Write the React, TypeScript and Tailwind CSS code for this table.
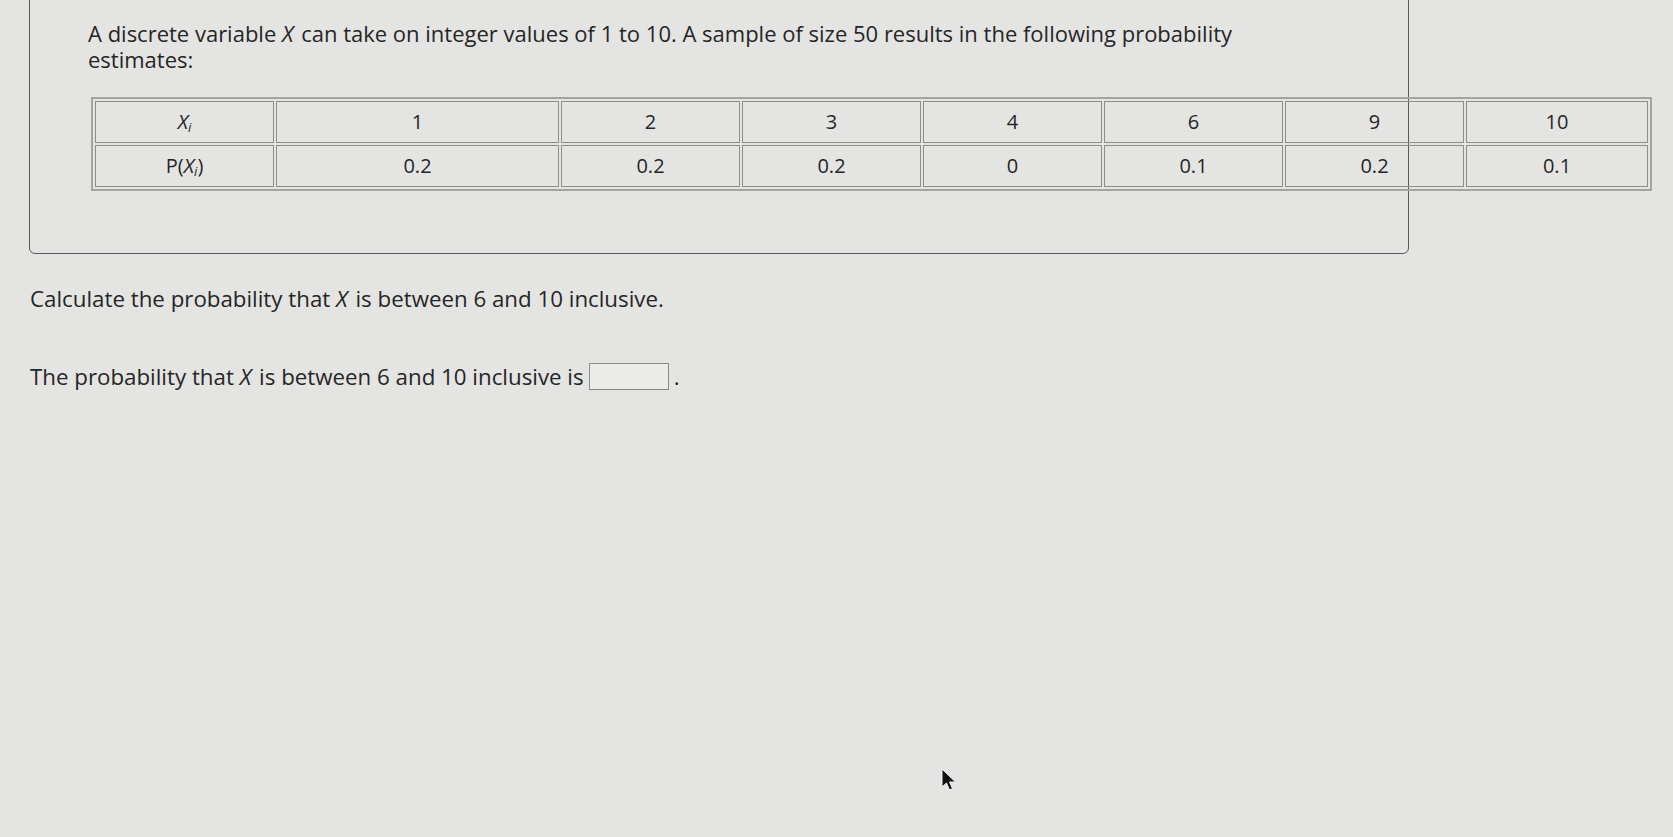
import React from "react";

const cols = [
  { x: "1", p: "0.2", w: "w-[283px]" },
  { x: "2", p: "0.2", w: "w-[179px]" },
  { x: "3", p: "0.2", w: "w-[179px]" },
  { x: "4", p: "0", w: "w-[179px]" },
  { x: "6", p: "0.1", w: "w-[179px]" },
  { x: "9", p: "0.2", w: "w-[179px]" },
  { x: "10", p: "0.1", w: "w-[182px]" },
];

const cell = "border border-[#8d8d8b] text-center align-middle h-[42px] p-0";

function Xi() {
  return (
    <span>
      <i>X</i>
      <sub className="text-[13px] italic">i</sub>
    </span>
  );
}

export default function App() {
  return (
    <div
      className="relative min-h-[837px] w-full overflow-hidden bg-[#e4e4e2] text-[#262626]"
      style={{ fontFamily: "'Open Sans', Lato, sans-serif" }}
    >
      {/* question box, top edge is off screen */}
      <div className="-mt-[12px] ml-[29px] w-[1380px] h-[266px] rounded-b-md border border-[#5a5a5a] pt-[31px] pl-[58px]">
        <p className="text-[22px] leading-[26px] w-[1175px]">
          <span>
            A discrete variable <i className="pr-[2px]">X</i> can take on integer values of 1 to 10. A sample of size 50
            results in the following probability
          </span>
          <br />
          <span>estimates:</span>
        </p>

        <table className="mt-[25px] ml-[3px] w-[1561px] table-fixed border-separate border-spacing-[2px] border-2 border-[#a3a3a1] text-[20px]">
          <colgroup>
            <col className="w-[179px]" />
            {cols.map((c) => (
              <col key={c.x} className={c.w} />
            ))}
          </colgroup>
          <tbody>
            <tr>
              <td className={cell}>
                <Xi />
              </td>
              {cols.map((c) => (
                <td key={c.x} className={cell}>
                  {c.x}
                </td>
              ))}
            </tr>
            <tr>
              <td className={cell}>
                P(<Xi />)
              </td>
              {cols.map((c) => (
                <td key={c.x} className={cell}>
                  {c.p}
                </td>
              ))}
            </tr>
          </tbody>
        </table>
      </div>

      <p className="mt-[32px] ml-[30px] text-[22.3px] leading-[26px]">
        Calculate the probability that <i className="pr-[2px]">X</i> is between 6 and 10 inclusive.
      </p>

      <div className="mt-[51px] ml-[30px] flex items-center text-[22.3px] leading-[26px]">
        <span>
          The probability that <i className="pr-[2px]">X</i> is between 6 and 10 inclusive is
        </span>
        <span className="ml-[5px] inline-block w-[80px] h-[27px] border border-[#8a8a88] bg-[#ebebe9]" />
        <span className="ml-[5px]">.</span>
      </div>

      {/* mouse pointer */}
      <svg className="absolute left-[940px] top-[768px]" width="18" height="24" viewBox="0 0 18 24">
        <path d="M2 1 L2 19 L6.5 15 L9.5 22 L12.5 20.5 L9.5 14 L15.5 14 Z" fill="#111" stroke="#f4f4f4" strokeWidth="1" />
      </svg>
    </div>
  );
}
